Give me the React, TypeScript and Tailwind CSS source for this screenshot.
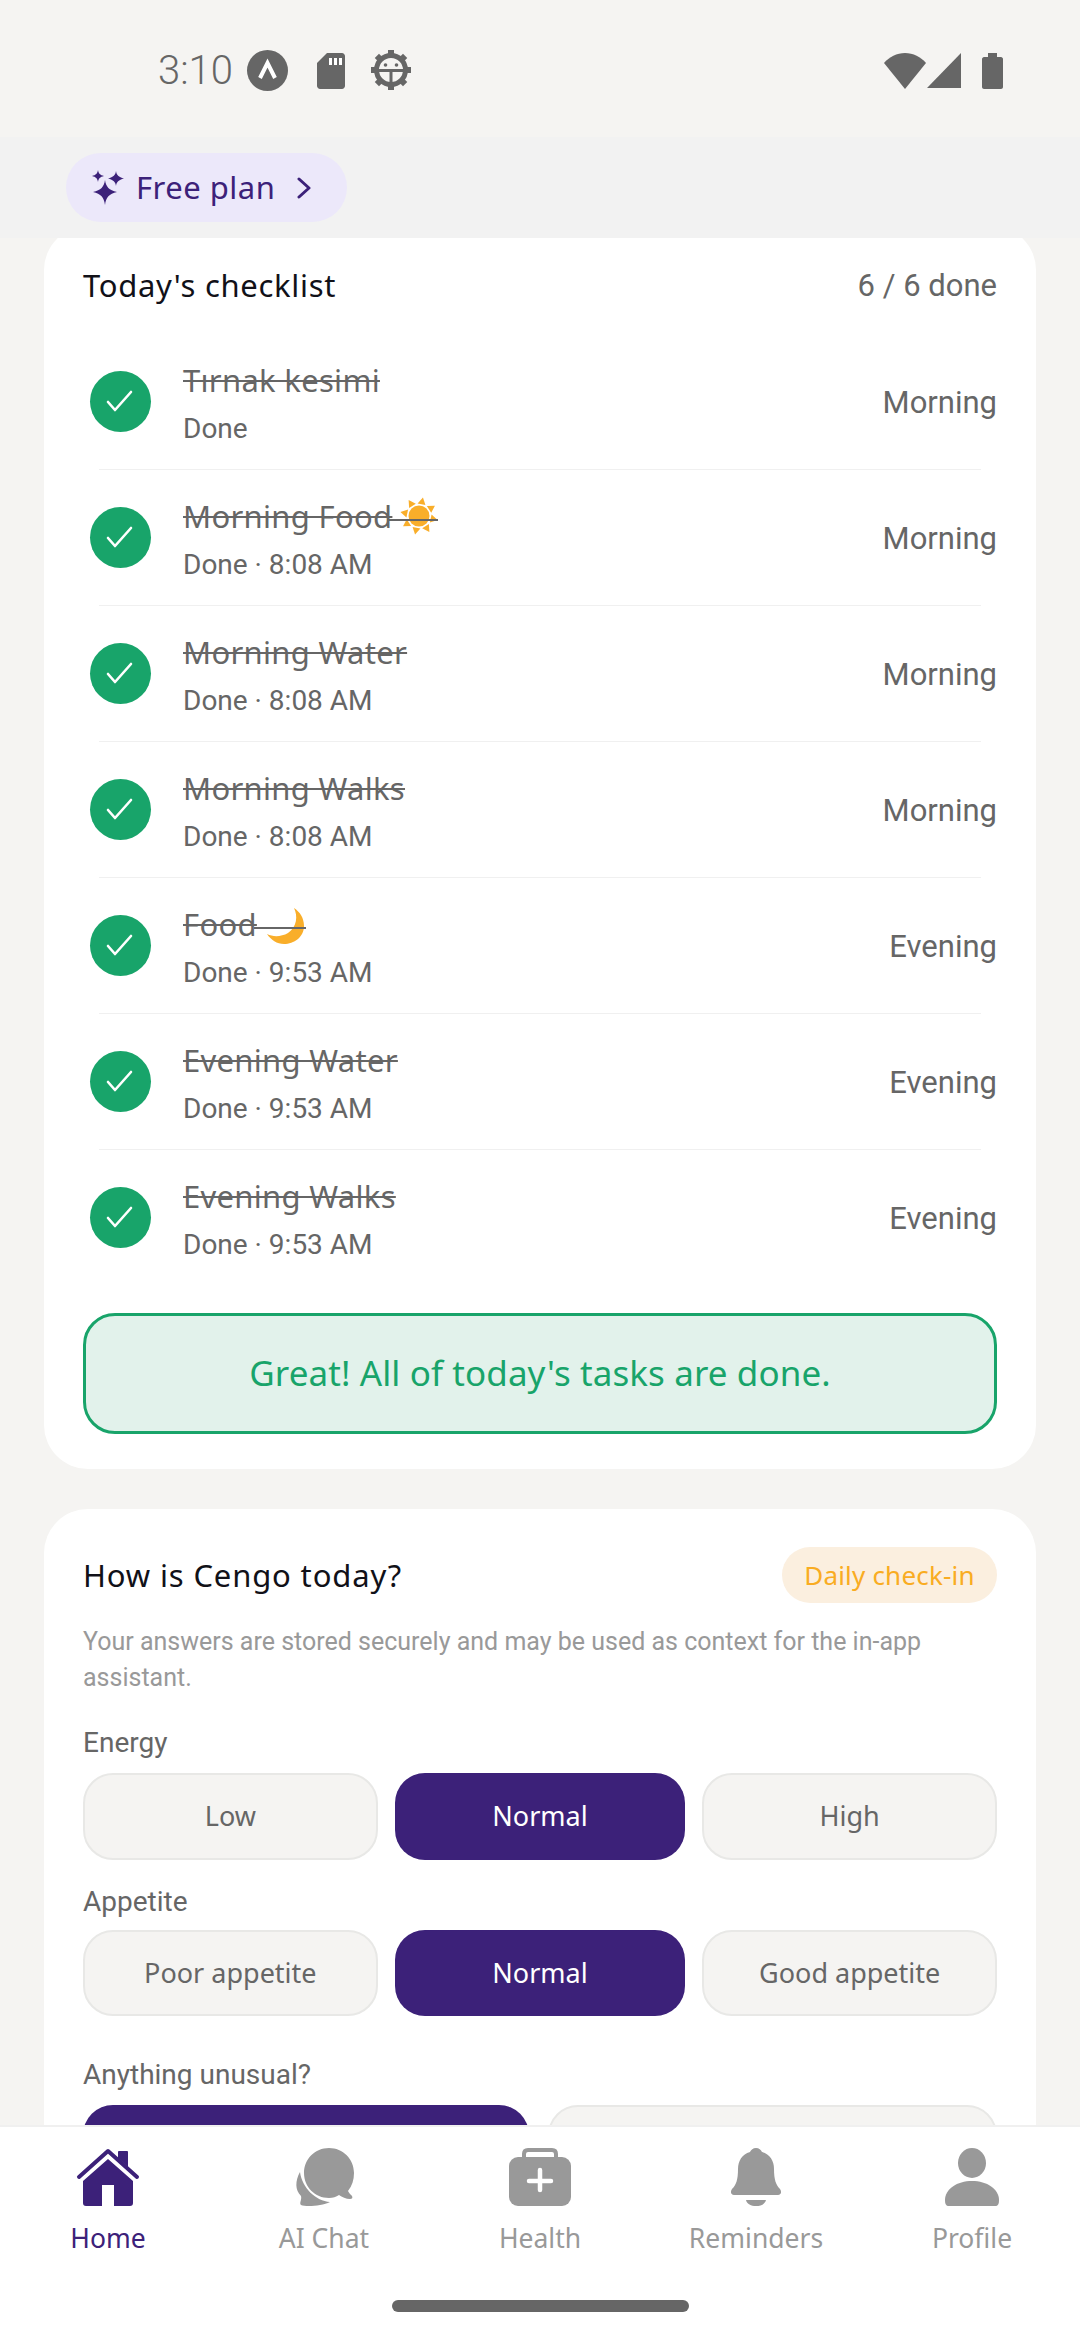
import React from "react";

const nun = "font-['Noto_Sans',sans-serif]";
const rob = "font-['Roboto',sans-serif]";

const Sun = () => (
  <span className="relative inline-block w-[51px] h-[10px] -ml-[5px]">
    <svg width="40" height="40" viewBox="0 0 40 40" className="absolute left-[12px] top-[-21px]">
      <circle cx="20" cy="19" r="10.5" fill="#f9ae2a" />
      {[0, 45, 90, 135, 180, 225, 270, 315].map((a) => (
        <polygon key={a} points="16,7 24,7 20,0" fill="#f9ae2a" transform={`rotate(${a + 12} 20 19)`} />
      ))}
    </svg>
    <span className="absolute left-0 right-0 top-[1px] h-[2px] bg-[#666666]" />
  </span>
);

const Moon = () => (
  <span className="relative inline-block w-[52px] h-[10px] -ml-[3px]">
    <svg width="40" height="38" viewBox="0 0 40 38" className="absolute left-[13px] top-[-18px]">
      <path d="M27 0C33 4 37 10 37 18C37 29 27 36 17 36C10 36 4 32 0 26C6 29 14 29 21 25C30 19 31 8 27 0Z" fill="#f9ae2a" />
    </svg>
    <span className="absolute left-0 right-0 top-[1px] h-[2px] bg-[#666666]" />
  </span>
);

const rows: { t: string; s: string; p: string; e?: React.ReactNode }[] = [
  { t: "Tırnak kesimi", s: "Done", p: "Morning" },
  { t: "Morning Food", s: "Done · 8:08 AM", p: "Morning", e: <Sun /> },
  { t: "Morning Water", s: "Done · 8:08 AM", p: "Morning" },
  { t: "Morning Walks", s: "Done · 8:08 AM", p: "Morning" },
  { t: "Food", s: "Done · 9:53 AM", p: "Evening", e: <Moon /> },
  { t: "Evening Water", s: "Done · 9:53 AM", p: "Evening" },
  { t: "Evening Walks", s: "Done · 9:53 AM", p: "Evening" },
];

const Row = ({ t, s, p, e }: (typeof rows)[number]) => (
  <div className="h-[135px] flex items-center pl-[7px]">
    <div className="w-[61px] h-[61px] rounded-full bg-[#18a46a] flex items-center justify-center shrink-0">
      <svg width="61" height="61" viewBox="0 0 61 61" fill="none">
        <path d="M18 31L25 39L41 21" stroke="#fff" strokeWidth="2.6" strokeLinecap="round" strokeLinejoin="round" />
      </svg>
    </div>
    <div className="ml-[32px] pt-[5px] flex-1 flex flex-col">
      <div className={`${nun} text-[31px] leading-[42px] tracking-[0.3px] text-[#666666] line-through decoration-2 whitespace-nowrap`}>
        {t}
        {e}
      </div>
      <div className={`${rob} text-[28px] leading-[40px] mt-[8px] text-[#666666]`}>{s}</div>
    </div>
    <div className={`${rob} text-[31px] mt-[3px] text-[#666666]`}>{p}</div>
  </div>
);

const Opt = ({ label, on, h = "h-[87px]" }: { label: string; on?: boolean; h?: string }) => (
  <div
    className={`${h} flex-1 rounded-[30px] flex items-center justify-center ${nun} text-[27px] ${
      on ? "bg-[#3c2179] text-white" : "bg-[#f5f4f2] border-2 border-[#e8e8e6] text-[#666666]"
    }`}
  >
    {label}
  </div>
);

const Label = ({ children }: { children: React.ReactNode }) => (
  <div className={`${rob} text-[28px] leading-[36px] text-[#666666]`}>{children}</div>
);

const Tab = ({ label, on, children }: { label: string; on?: boolean; children: React.ReactNode }) => (
  <div className="flex-1 flex flex-col items-center">
    <svg width="64" height="64" viewBox="0 0 64 64" className={on ? "text-[#3c2179]" : "text-[#999999]"}>
      {children}
    </svg>
    <div className={`${nun} text-[26.5px] leading-[40px] mt-[8px] ${on ? "text-[#3c2179]" : "text-[#999999]"}`}>{label}</div>
  </div>
);

export default function App() {
  return (
    <div className="w-[1080px] h-[2340px] flex flex-col overflow-hidden bg-[#f5f4f2]">
      {/* status bar */}
      <div className="h-[137px] shrink-0 flex items-start pt-[50px] pl-[158px] pr-[77px]">
        <div className={`${rob} font-[350] text-[40px] leading-[42px] text-[#666666]`}>3:10</div>
        <svg width="41" height="41" viewBox="0 0 41 41" className="ml-[14px]">
          <circle cx="20.5" cy="20.5" r="20.5" fill="#666666" />
          <path d="M13 28L20.5 13L28 28" fill="none" stroke="#fff" strokeWidth="4" />
        </svg>
        <svg width="28" height="36" viewBox="0 0 28 36" className="ml-[29px] mt-[3px]">
          <path d="M10 0H25C26.5 0 28 1.5 28 3V33C28 34.5 26.5 36 25 36H3C1.500 36 0 34.5 0 33V10Z" fill="#666666" />
          <rect x="12" y="5" width="3" height="7" fill="#fff" />
          <rect x="17" y="5" width="3" height="7" fill="#fff" />
          <rect x="22" y="5" width="3" height="7" fill="#fff" />
        </svg>
        <svg width="40" height="40" viewBox="0 0 40 40" className="ml-[26px]">
          <circle cx="20" cy="20" r="14.5" fill="none" stroke="#666666" strokeWidth="5" />
          {[0, 45, 90, 135, 180, 225, 270, 315].map((a) => (
            <rect key={a} x="17" y="0" width="6" height="6" fill="#666666" transform={`rotate(${a} 20 20)`} />
          ))}
          <rect x="6" y="19" width="28" height="3" fill="#666666" />
          <rect x="18.5" y="20" width="3" height="14" fill="#666666" />
          <circle cx="14.5" cy="15" r="1.8" fill="#666666" />
          <circle cx="25.5" cy="15" r="1.8" fill="#666666" />
        </svg>
        <div className="flex-1" />
        <svg width="42" height="36" viewBox="0 0 42 36" className="mt-[3px]">
          <path d="M0 10C5 4 13 0 21 0C29 0 37 4 42 10L21 36Z" fill="#666666" />
        </svg>
        <svg width="35" height="36" viewBox="0 0 35 36" className="ml-[1px] mt-[3px]">
          <path d="M34 0V35H0Z" fill="#666666" />
        </svg>
        <svg width="21" height="36" viewBox="0 0 21 36" className="ml-[20px] mt-[3px]">
          <path d="M6 0H15V4H19C20 4 21 5 21 6V34C21 35 20 36 19 36H2C1 36 0 35 0 34V6C0 5 1 4 2 4H6Z" fill="#666666" />
        </svg>
      </div>

      {/* header */}
      <div className="h-[101px] shrink-0 bg-[#f2f2f2] pl-[66px] pt-[16px] relative z-10">
        <div className="w-[281px] h-[69px] rounded-full bg-[#ece8fa] flex items-center pl-[26px]">
          <svg width="32" height="36" viewBox="0 0 32 36" className="shrink-0">
            <path d="M13 10C14 17 17 20 25 22C17 24 14 27 13 35C12 27 9 24 1 22C9 20 12 17 13 10Z" fill="#3c2179" />
            <path d="M6 0C6.600 3.500 8 5 12 6C8 7 6.600 8.500 6 12C5.400 8.500 4 7 0 6C4 5 5.400 3.500 6 0Z" fill="#3c2179" />
            <path d="M24 1C24.600 5 26.500 7 32 8.500C26.500 10 24.600 12 24 16C23.400 12 21.500 10 16 8.500C21.500 7 23.400 5 24 1Z" fill="#3c2179" />
          </svg>
          <span className={`${nun} text-[31px] tracking-[0.5px] text-[#3c2179] ml-[12px]`}>Free plan</span>
          <svg width="14" height="22" viewBox="0 0 14 22" className="ml-[22px]" fill="none">
            <path d="M2 2L12 11L2 20" stroke="#3c2179" strokeWidth="3" strokeLinecap="round" strokeLinejoin="round" />
          </svg>
        </div>
      </div>

      {/* scrolling content */}
      <div className="flex-1 min-h-0 overflow-hidden px-[44px]">
        <div className="-mt-[12px] bg-white rounded-[44px] pt-[36px] px-[39px] pb-[35px]">
          <div className="flex items-center justify-between h-[46px] mb-[26px]">
            <span className={`${nun} text-[31px] tracking-[0.7px] text-[#111118]`}>Today's checklist</span>
            <span className={`${rob} text-[31px] mt-[2px] text-[#666666]`}>6 / 6 done</span>
          </div>
          {rows.map((r, i) => (
            <React.Fragment key={r.t}>
              {i > 0 && <div className="h-[1px] mx-[16px] bg-[#f0f0f0]" />}
              <Row {...r} />
            </React.Fragment>
          ))}
          <div className={`mt-[28px] h-[121px] rounded-[32px] border-[3px] border-[#18a46a] bg-[#e2f2eb] flex items-center justify-center ${nun} text-[35px] tracking-[0.1px] text-[#18a46a]`}>
            Great! All of today's tasks are done.
          </div>
        </div>

        <div className="mt-[40px] bg-white rounded-[44px] pt-[38px] px-[39px] pb-[40px]">
          <div className="flex items-center justify-between h-[56px]">
            <span className={`${nun} text-[31px] tracking-[0.85px] text-[#111118]`}>How is Cengo today?</span>
            <span className={`${nun} w-[215px] h-[56px] rounded-full bg-[#fbefdf] text-[#f9ac22] text-[26px] tracking-[0.2px] flex items-center justify-center`}>
              Daily check-in
            </span>
          </div>
          <div className={`${rob} mt-[21px] text-[25px] leading-[36px] text-[#999999]`}>
            Your answers are stored securely and may be used as context for the in-app assistant.
          </div>
          <div className="mt-[29px]">
            <Label>Energy</Label>
          </div>
          <div className="flex gap-[17px] mt-[12px]">
            <Opt label="Low" />
            <Opt label="Normal" on />
            <Opt label="High" />
          </div>
          <div className="mt-[24px]">
            <Label>Appetite</Label>
          </div>
          <div className="flex gap-[17px] mt-[10px]">
            <Opt label="Poor appetite" h="h-[86px]" />
            <Opt label="Normal" on h="h-[86px]" />
            <Opt label="Good appetite" h="h-[86px]" />
          </div>
          <div className="mt-[41px]">
            <Label>Anything unusual?</Label>
          </div>
          <div className="flex gap-[19px] mt-[12px]">
            <Opt label="" on />
            <Opt label="" />
          </div>
        </div>
      </div>

      {/* bottom nav */}
      <div className="h-[215px] shrink-0 bg-white border-t-2 border-[#f0f0f0] flex flex-col relative z-10">
        <div className="flex pt-[19px]">
          <Tab label="Home" on>
            <path d="M32 13L7 35V57C7 59 8 60 10 60H26V39H38V60H54C56 60 57 59 57 57V35Z" fill="currentColor" />
            <path d="M3 31L32 5L61 31" fill="none" stroke="currentColor" strokeWidth="4" strokeLinecap="round" strokeLinejoin="round" />
            <path d="M42 12V6C42 5.500 42.500 5 43 5H51C51.500 5 52 5.500 52 6V21Z" fill="currentColor" />
          </Tab>
          <Tab label="AI Chat">
            <path d="M37 2C51 2 62 13 62 27C62 34 60 40 56 45C57 47 59 49 60 50C61 52 60 53 58 53C54 53 50 51 47 49C44 51 41 52 37 52C23 52 12 41 12 27C12 13 23 2 37 2Z" fill="currentColor" />
            <path d="M8 26C3 35 3 44 9 50C10 54 7 57 9 59C14 61 30 60 38 56C24 55 10 42 8 26Z" fill="currentColor" />
          </Tab>
          <Tab label="Health">
            <rect x="1" y="11" width="62" height="49" rx="9" fill="currentColor" />
            <path d="M16 13V8C16 5 18 4 20 4H44C46 4 48 5 48 8V13" fill="none" stroke="currentColor" strokeWidth="4" />
            <path d="M32 24V44M21 35H43" stroke="#fff" strokeWidth="4.500" strokeLinecap="round" />
          </Tab>
          <Tab label="Reminders">
            <path d="M32 2C35 2 37 4 38 6C46 8 50 15 50 23C50 34 52 39 56 43C58 46 57 49 54 49H10C7 49 6 46 8 43C12 39 14 34 14 23C14 15 18 8 26 6C27 4 29 2 32 2Z" fill="currentColor" />
            <path d="M22 54H42C41 58 37 60 32 60C27 60 23 58 22 54Z" fill="currentColor" />
          </Tab>
          <Tab label="Profile">
            <ellipse cx="32" cy="17" rx="14" ry="15" fill="currentColor" />
            <path d="M5 54C5 43 17 35 32 35C47 35 59 43 59 54C59 58 58 60 55 60H9C6 60 5 58 5 54Z" fill="currentColor" />
          </Tab>
        </div>
        <div className="mt-auto mb-[28px] mx-auto w-[297px] h-[12px] rounded-full bg-[#666666]" />
      </div>
    </div>
  );
}
